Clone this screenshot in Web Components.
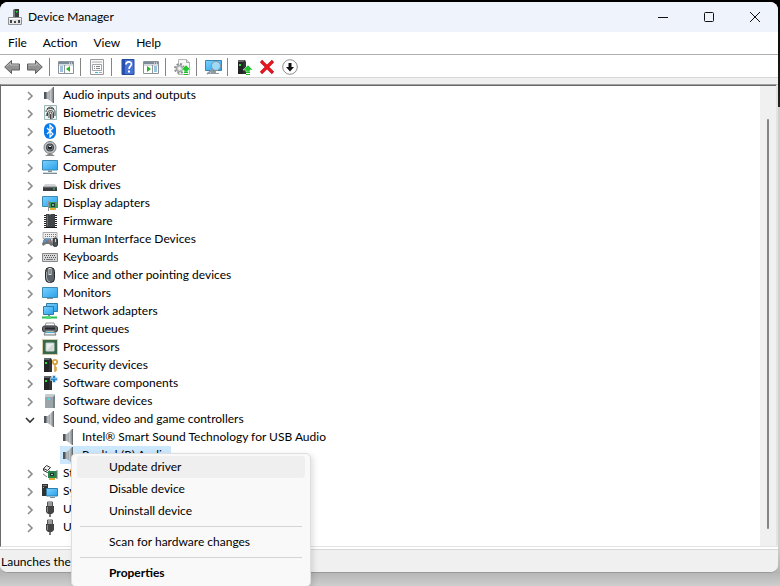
<!DOCTYPE html>
<html lang="en">
<head>
<meta charset="utf-8">
<title>Device Manager</title>
<style>
html { height: 100%; }
body {
  margin: 0; height: 100%; overflow: hidden;
  font: 12px/18px Lato, "Noto Sans", sans-serif; color: #000;
  background:
    linear-gradient(#000, #222 107px, transparent 107px) right top / 3px 100% no-repeat,
    linear-gradient(#000, #000) top / 100% 20px no-repeat,
    linear-gradient(to top, #cecece, #b4b4b4 14px, #d0d0d0 40px) #ccc;
}
</style>
</head>
<body>
<device-manager></device-manager>

<script>
const device = '<path d="M2 1h7l1 2v12H2z" fill="#303234"/><path d="M2 1h7l-2 2H2z" fill="#64686b"/><path d="M2 3h5v12H2z" fill="#222426"/><rect x="3" y="5" width="2" height="2" fill="#29e03a"/>';
const upArrow = '<path d="M11 6l5 5h-3v2H9v-2H6z" fill="#22c62c" stroke="#fff" stroke-width=".5"/><path d="M9 13.500h4M9 15.500h4" stroke="#25b82f"/>';
const speaker = '<path d="M2 5h4v7H2z" fill="#80868a"/><path d="M2 5h2v7H2z" fill="#4f555a"/><path d="M6 5l5-5v16l-5-4z" fill="url(#g)"/><path d="M11 0h1v16h-1z" fill="#666c70"/><path d="M6 5v7" stroke="#d9dcde"/><defs><linearGradient id="g"><stop stop-color="#7f868b"/><stop offset=".5" stop-color="#c2c6c9"/><stop offset="1" stop-color="#858b90"/></linearGradient></defs>';
const blue = '<defs><linearGradient id="b" x2="1" y2="1"><stop stop-color="#7bd2ff"/><stop offset="1" stop-color="#28a0ea"/></linearGradient></defs>';
const usb = '<path d="M5.500 1h5v4h-5z" fill="#e2e2e2" stroke="#555"/><path d="M7 2v2M9 2v2" stroke="#555"/><path d="M4 5h8v6l-2 2H6l-2-2z" fill="#444"/><path d="M5 6h1v5H5z" fill="#888"/><path d="M7 13h2v3H7z" fill="#777"/>';
const panel = '<path d="M.5 2.500h15v12H.5z" fill="#fff" stroke="#8b9299"/><path d="M1 3h14v2H1z" fill="#7d8b99"/><path d="M11 4h1M13 4h1" stroke="#fff"/><path d="M1 6h14" stroke="#aab4bd"/>';
const ICONS = {
  app: '<path d="M6 1l2-1h4v9H6z" fill="#3a3c3e"/><path d="M6 1l2-1v9H6z" fill="#73777a"/><rect x="9" y="2" width="1.500" height="1.500" fill="#28e845"/><path d="M1.500 8.500h13v7h-13z" fill="#e5e5e6" stroke="#8f9192"/><path d="M2 9h12v1H2z" fill="#fff"/><path d="M3 11h2v3H3zM11 11h2v3h-2zM7 12h2v2H7z" fill="#424446"/>',
  back: '<path d="M.7 8L7.500 1.500V5h8v6h-8v3.500z" fill="#929292" stroke="#5e5e5e"/><path d="M2.500 7.500L6.500 4v2h8" fill="none" stroke="#bebebe"/>',
  forward: '<path d="M15.300 8L8.500 1.500V5h-8v6h8v3.500z" fill="#929292" stroke="#5e5e5e"/><path d="M1.500 6h8V4l3.500 3.500" fill="none" stroke="#bebebe"/>',
  tree: panel + '<path d="M2 8h3M2 10h3M2 12h3" stroke="#3d84c4"/><path d="M6.500 6v8" stroke="#90989f"/><path d="M12 7v6L8 10z" fill="#2db329"/>',
  actions: panel + '<path d="M11 8h3M11 10h3M11 12h3" stroke="#3d84c4"/><path d="M9.500 6v8" stroke="#90989f"/><path d="M4 7v6l4-3z" fill="#2db329"/>',
  properties: '<path d="M1.500.5h13v15h-13z" fill="#fafafa" stroke="#969a9e"/><path d="M3 3h10M4 5.500h3" stroke="#a5a9ac"/><path d="M3.500 5.500h9v6h-9z" fill="#fff" stroke="#a2a6aa"/><path d="M5 7.500h1M7 7.500h4M5 9.500h1M7 9.500h4" stroke="#7e858b"/><path d="M6 13.500h3" stroke="#2ebde7"/><path d="M10 13.500h3" stroke="#aaa"/>',
  help: '<path d="M2 .5h12v15H2z" fill="#4773d7" stroke="#254b9c"/><path d="M2 1h3v14H2z" fill="#274fae"/><path d="M6 5.500C6 2 11.500 2 11.500 5c0 2-2.500 2.200-2.500 5" fill="none" stroke="#fff" stroke-width="1.700"/><path d="M8 11.500h2v2H8z" fill="#fff"/>',
  scan: '<path d="M4.500.5h8l3 3v12h-11z" fill="#f7f7f7" stroke="#b5b5b5"/><path d="M12.500.5v3h3" fill="#ddd" stroke="#aaa"/><circle cx="5.500" cy="9.500" r="4.500" fill="none" stroke="#8d9194" stroke-width="2" stroke-dasharray="2 1.530"/><circle cx="5.500" cy="9.500" r="3" fill="#ddd" stroke="#a2a5a7" stroke-width="1.500"/><circle cx="5.500" cy="9.500" r="1" fill="#fff"/><g transform="translate(1 0)">' + upArrow + '</g>',
  remote: blue + '<path d="M.5 1.500h16v10H.5z" fill="url(#b)" stroke="#3686b1"/><path d="M6 12h5v2h3v1H3v-1h3z" fill="#929ba2"/><circle cx="11" cy="7" r="4.500" fill="#b9e6fa" fill-opacity=".75" stroke="#8b969f"/><path d="M8 10.500L2 15" stroke="#909ba4" stroke-width="1.700"/>',
  update: device + '<g transform="translate(1 0)">' + upArrow + '</g>',
  remove: '<path d="M2 2l12 12M14 2L2 14" stroke="#ca1420" stroke-width="3.200"/><path d="M3 3l10 10M13 3L3 13" stroke="#f21620" stroke-width="1.600"/>',
  disable: '<circle cx="8" cy="8" r="7.300" fill="#fff" stroke="#8d8d8d"/><path d="M6.500 4h3v4H12l-4 4.500L4 8h2.500z" fill="#111"/>',
  speaker,
  fingerprint: '<path d="M2.500.5h12v14h-12z" fill="#eff2f1" stroke="#9ab8b7"/><g fill="none" stroke="#333" stroke-width=".9"><path d="M5 4Q8.500 0 12 4M4 7q0-3.500 4.500-3.500T13 7v4M5.500 11V8Q5.500 5.500 8.500 5.500T11.500 8v5M7 13V9q0-2 1.500-2T10 9v5M8.500 9v5M4 11q1-1 1-3"/></g>',
  bluetooth: '<rect x="2" y="0" width="12" height="16" rx="6" fill="#087bea"/><path d="M5 5l6 6-3 3V2l3 3-6 6" fill="none" stroke="#fff" stroke-width="1.200"/>',
  camera: '<circle cx="8" cy="6.500" r="6" fill="#c3c7c9" stroke="#777c7f"/><circle cx="8" cy="6.500" r="4" fill="#464a4c"/><circle cx="8" cy="6.500" r="2.500" fill="#1a1c1d" stroke="#81888c"/><path d="M7 5h2v1H7z" fill="#d2ecf7"/><path d="M6 13h4l3 2H3z" fill="#888"/>',
  computer: blue + '<path d="M.5 1.500h15v9.500H.5z" fill="url(#b)" stroke="#3d8bb4"/><path d="M6 11.500h4v1.500H6z" fill="#848e95"/><path d="M1 14.500h14" stroke="#7b8991"/><path d="M1 13.500h14" stroke="#d2dbe0"/>',
  disk: '<path d="M3 7h10l2 3H1z" fill="#d2d4d5"/><path d="M1 10h14v4H1z" fill="#3a3d3f"/><path d="M1 10h14" stroke="#85898b"/><path d="M11 12h2" stroke="#32e652"/>',
  display: blue + '<path d="M.5 1.500h15v10H.5z" fill="url(#b)" stroke="#3d8bb4"/><path d="M7 7h9v6H7z" fill="#3c9a58"/><path d="M9 8h4v4H9z" fill="#243c36"/><path d="M10 9h2v2h-2z" fill="#76a698"/><path d="M8 14h6" stroke="#e5ad36" stroke-width="2"/><path d="M6.500 6v10M14 8h1" stroke="#8b9398"/>',
  firmware: '<path d="M4 1h3q1 1 2 0h4v14H4z" fill="#424548"/><path d="M3 2v13M14 2v13" stroke="#222" stroke-width="2" stroke-dasharray="1 1"/><path d="M5 2h1v11H5z" fill="#6b7074"/><path d="M4 14.500h9" stroke="#1b1b1b"/>',
  hid: '<path d="M1 1.500h14v6H1z" fill="#eee" stroke="#aaa"/><path d="M3 3.500h11M3 5.500h11" stroke="#777" stroke-dasharray="1 1"/><path d="M2 8h7l2 6-2 1-2-2H4l-3 2-1-2z" fill="#70777c"/><path d="M3 8.500h5M1 10h3" stroke="#5596cf" stroke-width="2"/><circle cx="7.500" cy="10.500" r="1" fill="#ed5d42"/><rect x="11" y="7" width="4.500" height="8.500" rx="2" fill="#4e555b" stroke="#2d3235"/><path d="M13.500 8v3" stroke="#d2d6d8"/>',
  keyboard: '<path d="M.5 4.500h15v8H.5z" fill="#d5d7d8" stroke="#85898b"/><path d="M2 6.500h12M3 8.500h11M2 10.500h12" stroke="#555" stroke-dasharray="1 1"/><path d="M4 10.500h7" stroke="#777"/>',
  mouse: '<rect x="3.500" y=".5" width="9" height="15" rx="4" fill="#5c646b" stroke="#24282b"/><path d="M4.500 5v6q1 4 3.500 4" fill="none" stroke="#a2a9ae"/><path d="M8 1v7" stroke="#dde2e5" stroke-width="3"/><path d="M8 2v5" stroke="#333"/>',
  monitor: blue + '<path d="M.5 2.500h15v10H.5z" fill="url(#b)" stroke="#3d8bb4"/><path d="M5 13.500h6" stroke="#809199"/>',
  network: blue + '<path d="M4.500.5h11v8h-11z" fill="url(#b)" stroke="#327ca3"/><path d="M1.500 3.500h10v8h-10z" fill="url(#b)" stroke="#327ca3"/><path d="M6 12h2v2H6z" fill="#829198"/><path d="M0 14.500h15" stroke="#2dbd50" stroke-width="2"/><path d="M4 13h5v3H4z" fill="#5bd777"/>',
  printer: '<path d="M4 2h8l1 3H3z" fill="#fafafa" stroke="#999"/><rect x=".5" y="5" width="15" height="6" rx="2" fill="#64696d" stroke="#3c4145"/><path d="M3 7.500h10" stroke="#25292b" stroke-width="2"/><path d="M4 10h8l2 4H2z" fill="#eceeef" stroke="#777"/><path d="M4 11.500h8" stroke="#41b4da"/>',
  processor: '<path d="M1 1h14v14H1z" fill="#38684b"/><path d="M.5 .5h15v15H.5z" fill="none" stroke="#aa9952" stroke-dasharray="1 1"/><path d="M4 4h8v8H4z" fill="#eceeee" stroke="#bfcbc5"/><path d="M5 11L11 5v6z" fill="#d4d7d8"/>',
  security: device + '<path d="M10 1h6v15h-6z" fill="#fff"/><g fill="none" stroke="#d6a33d"><circle cx="13" cy="5" r="2.200" stroke-width="1.800"/><path d="M13 7v8M13 11h2M13 13h2" stroke-width="1.500"/></g>',
  component: device + '<path d="M8.500 2.500h2v-2h3v2h2v3h-2v2h-3v-2h-2z" fill="#2483c9" stroke="#fff" stroke-width=".5"/><path d="M9 3.500h6" stroke="#68b9ea"/>',
  software: '<path d="M3 2l2-1h7l1 1v13H3z" fill="#9ba5aa"/><path d="M3 2l2-1h7l1 1-2 2H3z" fill="#c5cbce"/><path d="M11 4l2-2v13h-2z" fill="#788389"/><rect x="6" y="5" width="2" height="2" fill="#44ddea"/>',
  storage: '<path d="M1.500 3.500l3-3 4 2-3 3zM1.500 3.500v2l4 2 2-2" fill="#eee" stroke="#333"/><path d="M6 6h9v7H6z" fill="#28854a"/><path d="M8 8h4v3H8z" fill="#243832"/><path d="M9 9h2v1H9z" fill="#b2c5bf"/><path d="M7 14h6" stroke="#dfad35" stroke-width="2"/><path d="M15 5v9M1 9l4 3" stroke="#777"/>',
  system: blue + '<path d="M0 1h6v12H0z" fill="#303234"/><path d="M1 2h4v1H1z" fill="#777"/><path d="M1 4h1v1H1z" fill="#34f056"/><path d="M4.500 5.500h11v7.500h-11z" fill="url(#b)" stroke="#317fa7"/><path d="M8 14.500h5" stroke="#7f8c92"/>',
  usb
};

const define = (name, css, html, setup) => {
  const template = document.createElement('template');
  template.innerHTML = `<style>*,:host{box-sizing:border-box}button{font:inherit;color:inherit;background:none;border:0;margin:0;padding:0;display:block}${css}</style>${html}`;
  customElements.define(name, class extends HTMLElement {
    connectedCallback() {
      if (this.shadowRoot) return;
      const content = template.content.cloneNode(true);
      if (setup) setup(this, content);
      this.attachShadow({ mode: 'open' }).append(content);
    }
  });
};

define('dm-icon', ':host{display:block;width:16px;height:16px;flex:none}svg{display:block;overflow:visible}',
  '<svg width="16" height="16" viewBox="0 0 16 16" aria-hidden="true"></svg>',
  (el, root) => { root.querySelector('svg').innerHTML = ICONS[el.getAttribute('name')]; });

define('title-bar', `
:host{display:flex;align-items:center;height:30px;flex:none;background:#eff3fb;padding-left:7px}
h1{font:inherit;margin:0 auto 0 5px}
button{width:46px;height:30px;display:grid;place-items:center}
svg{fill:none;stroke:#111}`, `
<dm-icon name="app"></dm-icon><h1><slot></slot></h1>
<button aria-label="Minimize"><svg width="12" height="12"><path d="M1 6.500h10"/></svg></button>
<button aria-label="Maximize"><svg width="12" height="12"><rect x="1.500" y="1.500" width="9" height="9" rx="1"/></svg></button>
<button aria-label="Close"><svg width="12" height="12"><path d="M1 1l10 10M11 1L1 11"/></svg></button>`);

define('menu-bar', ':host{display:flex;align-items:flex-start;gap:16px;height:23px;flex:none;padding:2px 8px 0;background:#fff;border-bottom:1px solid #b0b0b0}',
  '<button>File</button><button>Action</button><button>View</button><button>Help</button>');

define('tool-button', ':host{display:block}button{width:23px;height:22px;display:grid;place-items:center}',
  '<button><dm-icon></dm-icon></button>', (el, root) => {
    root.querySelector('button').setAttribute('aria-label', el.getAttribute('label'));
    root.querySelector('dm-icon').setAttribute('name', el.getAttribute('icon'));
  });

define('tool-bar', `
:host{display:flex;height:29px;flex:none;background:#fff;padding-top:1px;
border-bottom:6px solid #f0f0f0;box-shadow:inset 0 -1px #d8d8d8}
i{width:8px;height:18px;margin-top:2px}
i::before{content:"";display:block;width:1px;height:100%;margin-left:3px;background:#858585}`, `
<tool-button icon="back" label="Back"></tool-button><tool-button icon="forward" label="Forward"></tool-button><i></i>
<tool-button icon="tree" label="Show or hide console tree"></tool-button><i></i>
<tool-button icon="properties" label="Properties"></tool-button><i></i>
<tool-button icon="help" label="Help"></tool-button><tool-button icon="actions" label="Show or hide action pane"></tool-button><i></i>
<tool-button icon="scan" label="Scan for hardware changes"></tool-button><i></i>
<tool-button icon="remote" label="Add drivers"></tool-button><i></i>
<tool-button icon="update" label="Update driver"></tool-button><tool-button icon="remove" label="Uninstall device"></tool-button><tool-button icon="disable" label="Disable device"></tool-button>`);

define('tree-row', `
:host{display:flex;align-items:center;height:18px;padding-left:23px}
button{width:12px;height:18px;margin-right:6px;display:grid;place-items:center;padding-top:2px;flex:none}
svg{fill:none;stroke:#8d8d8d;stroke-width:1.600;overflow:visible}
:host([open]) svg{stroke:#333;transform:rotate(90deg)}
:host([child]){padding-left:41px}
:host([child]) div{padding-left:1px}
span{padding:0 2px 0 5px;white-space:nowrap}
div{display:flex;align-items:center;height:18px}
:host([child]) button{visibility:hidden}
:host([selected]) div{background:#cce8ff}`, `
<button aria-label="Expand or collapse"><svg width="6" height="10"><path d="M1 1l4 4-4 4"/></svg></button>
<div><dm-icon></dm-icon><span><slot></slot></span></div>`,
  (el, root) => root.querySelector('dm-icon').setAttribute('name', el.getAttribute('icon')));

define('device-tree', `
:host{display:flex;flex:1;min-height:0;background:#fff;border:solid;border-width:1px 2px 1px 1px;border-color:#a0a0a0 #e3e3e3 #e3e3e3 #696969;box-shadow:inset 0 1px #696969;padding-top:1px}
.rows{flex:1;min-width:0}
.scroll{width:16px;background:#f0f0f0;padding:33px 7px 17px}
.thumb{height:100%;background:#858585;border-radius:1px}`,
  '<div class="rows"><slot></slot></div><div class="scroll"><div class="thumb"></div></div>');

define('status-bar', `
:host{display:flex;flex:none;height:23px;margin-top:2px;padding:2px 3px 1px 0;background:#f0f0f0;border-top:1px solid #d7d7d7}
span{border-right:1px solid #d7d7d7;padding:1px;width:85px;white-space:nowrap;overflow:hidden}
span:first-child{flex:1}span:nth-child(2){width:133px}`,
  '<span><slot></slot></span><span></span><span></span>');

define('context-menu', `
:host{display:block;background:#f9f9f9;border:1px solid #dedede;border-radius:5px;box-shadow:2px 2px 6px #0002;padding:2px 5px}
button{width:100%;height:22px;padding:0 32px;text-align:left;border-radius:3px;white-space:nowrap}
.active{background:#efefef}
.default{font-weight:bold}
hr{height:1px;border:0;margin:4px 3px;background:#d4d4d4}`, `
<div role="menu" aria-label="Device">
<button role="menuitem" class="active">Update driver</button>
<button role="menuitem">Disable device</button>
<button role="menuitem">Uninstall device</button>
<hr>
<button role="menuitem">Scan for hardware changes</button>
<hr>
<button role="menuitem" class="default">Properties</button>
</div>`);

define('device-manager', `
:host{display:block;height:100%;padding:2px 2px 13px 0}
main{display:flex;flex-direction:column;height:100%;background:#fff;border-radius:8px;overflow:hidden;border-bottom:1px solid #999}
context-menu{position:absolute;left:71px;top:453px;width:240px}`, `
<main>
<title-bar>Device Manager</title-bar>
<menu-bar></menu-bar>
<tool-bar></tool-bar>
<device-tree>
<tree-row icon="speaker">Audio inputs and outputs</tree-row>
<tree-row icon="fingerprint">Biometric devices</tree-row>
<tree-row icon="bluetooth">Bluetooth</tree-row>
<tree-row icon="camera">Cameras</tree-row>
<tree-row icon="computer">Computer</tree-row>
<tree-row icon="disk">Disk drives</tree-row>
<tree-row icon="display">Display adapters</tree-row>
<tree-row icon="firmware">Firmware</tree-row>
<tree-row icon="hid">Human Interface Devices</tree-row>
<tree-row icon="keyboard">Keyboards</tree-row>
<tree-row icon="mouse">Mice and other pointing devices</tree-row>
<tree-row icon="monitor">Monitors</tree-row>
<tree-row icon="network">Network adapters</tree-row>
<tree-row icon="printer">Print queues</tree-row>
<tree-row icon="processor">Processors</tree-row>
<tree-row icon="security">Security devices</tree-row>
<tree-row icon="component">Software components</tree-row>
<tree-row icon="software">Software devices</tree-row>
<tree-row icon="speaker" open>Sound, video and game controllers</tree-row>
<tree-row icon="speaker" child>Intel® Smart Sound Technology for USB Audio</tree-row>
<tree-row icon="speaker" child selected>Realtek(R) Audio</tree-row>
<tree-row icon="storage">Storage controllers</tree-row>
<tree-row icon="system">System devices</tree-row>
<tree-row icon="usb">Universal Serial Bus controllers</tree-row>
<tree-row icon="usb">USB Connector Managers</tree-row>
</device-tree>
<status-bar>Launches the</status-bar>
</main>
<context-menu></context-menu>`);
</script>
</body>
</html>
